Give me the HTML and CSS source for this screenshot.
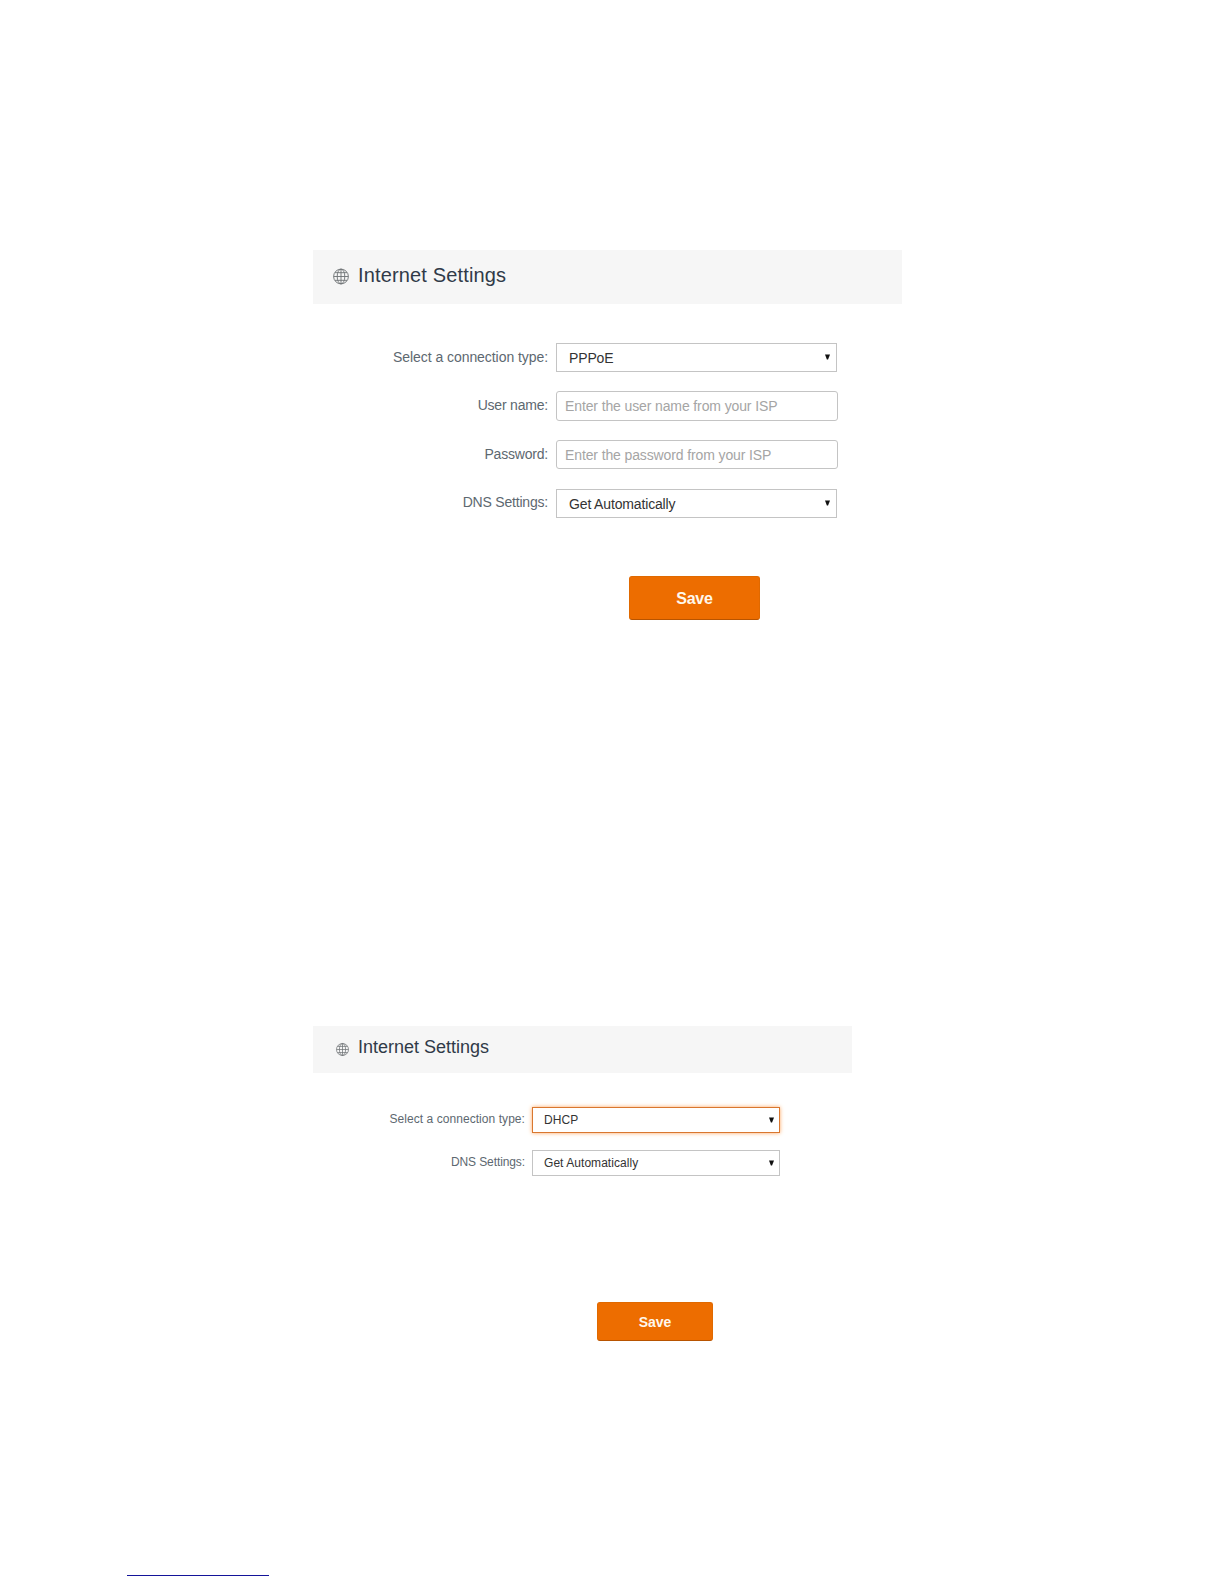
FILE: index.html
```html
<!DOCTYPE html>
<html lang="en">
<head>
    <meta charset="utf-8">
    <meta name="viewport" content="width=device-width, initial-scale=1.0">
    <title>Internet Settings</title>
    <link rel="stylesheet" href="styles.css">
</head>
<body>
    <main>
        <section class="panel pppoe">
            <header class="panel-header">
                <svg class="globe" viewBox="0 0 16 16">
                    <circle cx="8" cy="8" r="7.4"/>
                    <ellipse cx="8" cy="8" rx="3.8" ry="7.4"/>
                    <path d="M8 .6v14.8M.6 8h14.8M2 4.2h12M2 11.8h12"/>
                </svg>
                <h1>Internet Settings</h1>
            </header>
            <form>
                <div class="row first">
                    <label class="type-label" for="type1">Select a connection type:</label>
                    <div class="select-box">
                        <select id="type1"><option>PPPoE</option></select>
                        <svg class="arrow" viewBox="0 0 6 6"><path d="M0 0h6L3.7 6H2.3z"/></svg>
                    </div>
                </div>
                <div class="row">
                    <label for="username">User name:</label>
                    <input type="text" id="username" placeholder="Enter the user name from your ISP">
                </div>
                <div class="row">
                    <label for="password">Password:</label>
                    <input type="password" id="password" class="password" placeholder="Enter the password from your ISP">
                </div>
                <div class="row">
                    <label class="dns-label" for="dns1">DNS Settings:</label>
                    <div class="select-box">
                        <select id="dns1"><option>Get Automatically</option></select>
                        <svg class="arrow" viewBox="0 0 6 6"><path d="M0 0h6L3.7 6H2.3z"/></svg>
                    </div>
                </div>
                <button type="button">Save</button>
            </form>
        </section>

        <section class="panel dhcp">
            <header class="panel-header">
                <svg class="globe" viewBox="0 0 16 16">
                    <circle cx="8" cy="8" r="7.4"/>
                    <ellipse cx="8" cy="8" rx="3.8" ry="7.4"/>
                    <path d="M8 .6v14.8M.6 8h14.8M2 4.2h12M2 11.8h12"/>
                </svg>
                <h1>Internet Settings</h1>
            </header>
            <form>
                <div class="row">
                    <label class="type-label" for="type2">Select a connection type:</label>
                    <div class="select-box">
                        <select id="type2" class="active"><option>DHCP</option></select>
                        <svg class="arrow" viewBox="0 0 6 6"><path d="M0 0h6L3.7 6H2.3z"/></svg>
                    </div>
                </div>
                <div class="row">
                    <label class="dns-label" for="dns2">DNS Settings:</label>
                    <div class="select-box">
                        <select id="dns2"><option>Get Automatically</option></select>
                        <svg class="arrow" viewBox="0 0 6 6"><path d="M0 0h6L3.7 6H2.3z"/></svg>
                    </div>
                </div>
                <button type="button">Save</button>
            </form>
        </section>
    </main>
    <footer>
        <div class="footer-line"></div>
    </footer>
</body>
</html>
```
FILE: styles.css
```css
*{
    box-sizing: border-box;
}
body{
    margin: 0;
    height: 1584px;
    overflow: hidden;
    background-color: white;
    font-family: "Liberation Sans", Arial, sans-serif;
}
main{
    height: 1575px;
    padding-top: 250px;
}
.panel-header{
    display: flex;
    background-color: #f6f6f6;
}
h1{
    margin: 0;
    font-weight: normal;
    color: #303a48;
}
.globe{
    fill: none;
    stroke: #6c7073;
    stroke-width: 0.9;
}
form{
    display: flex;
    flex-direction: column;
}
.row{
    display: flex;
}
label{
    text-align: right;
    color: #5d6870;
    white-space: nowrap;
}
.select-box{
    position: relative;
    height: 100%;
}
select, input{
    display: block;
    width: 100%;
    height: 100%;
    margin: 0;
    border: 1px solid #c4c4c4;
    border-radius: 0;
    background-color: white;
    color: #333;
    font-family: inherit;
    appearance: none;
    outline: none;
}
input::placeholder{
    color: #a5a5a5;
}
.arrow{
    position: absolute;
    fill: #111;
}
button{
    padding: 0;
    border: 1px solid #e06900;
    border-bottom-color: #b85400;
    border-radius: 3px;
    background-color: #ed6d00;
    color: #fff8ec;
    font-family: inherit;
    font-weight: bold;
}

/* PPPoE panel */
.pppoe{
    width: 588px;
    height: 776px;
    margin-left: 313px;
}
.pppoe .panel-header{
    width: 589px;
    height: 54px;
    padding: 14px 0 0 20px;
}
.pppoe .globe{
    width: 16px;
    height: 17px;
    margin: 4px 9px 0 0;
}
.pppoe h1{
    font-size: 20px;
    line-height: 23px;
    letter-spacing: 0.15px;
}
.pppoe form{
    gap: 19px;
    padding-top: 39px;
}
.pppoe .row{
    height: 30px;
}
.pppoe .first{
    height: 29px;
}
.pppoe label{
    width: 235px;
    margin-right: 8px;
    font-size: 14px;
    line-height: 29px;
    letter-spacing: -0.2px;
}
.pppoe .type-label{
    letter-spacing: -0.06px;
}
.pppoe .dns-label{
    line-height: 27px;
}
.pppoe .select-box{
    width: 281px;
    height: 29px;
}
.pppoe select{
    padding: 0 12px;
    font-size: 14px;
    letter-spacing: -0.15px;
}
.pppoe input{
    width: 282px;
    padding: 0 8px;
    border-radius: 3px;
    font-size: 14px;
    letter-spacing: -0.12px;
}
.pppoe .password{
    height: 29px;
}
.pppoe .arrow{
    top: 11px;
    right: 7px;
    width: 5px;
    height: 6px;
}
.pppoe button{
    width: 131px;
    height: 44px;
    margin: 38px 0 0 316px;
    padding-top: 1px;
    font-size: 16px;
    letter-spacing: -0.2px;
}

/* DHCP panel */
.dhcp{
    width: 539px;
    margin-left: 313px;
}
.dhcp .panel-header{
    height: 47px;
    padding: 11px 0 0 23px;
}
.dhcp .globe{
    width: 13px;
    height: 15px;
    margin: 5px 9px 0 0;
}
.dhcp h1{
    font-size: 18px;
    line-height: 21px;
}
.dhcp form{
    gap: 17px;
    padding-top: 34px;
}
.dhcp .row{
    height: 26px;
}
.dhcp label{
    width: 212px;
    margin-right: 7px;
    font-size: 12px;
    line-height: 24px;
}
.dhcp .type-label{
    letter-spacing: 0.06px;
}
.dhcp .dns-label{
    letter-spacing: -0.1px;
}
.dhcp .select-box{
    width: 248px;
}
.dhcp select{
    padding: 0 11px;
    font-size: 12px;
    letter-spacing: 0.05px;
}
.dhcp .active{
    border-color: #d9772f;
    box-shadow: 0 0 4px #ffa55c;
}
.dhcp .arrow{
    top: 10px;
    right: 6px;
    width: 5px;
    height: 6px;
}
.dhcp button{
    width: 116px;
    height: 39px;
    margin: 109px 0 0 284px;
    font-size: 14px;
}

.footer-line{
    width: 142px;
    height: 1px;
    margin-left: 127px;
    background-color: #14149a;
}
```
